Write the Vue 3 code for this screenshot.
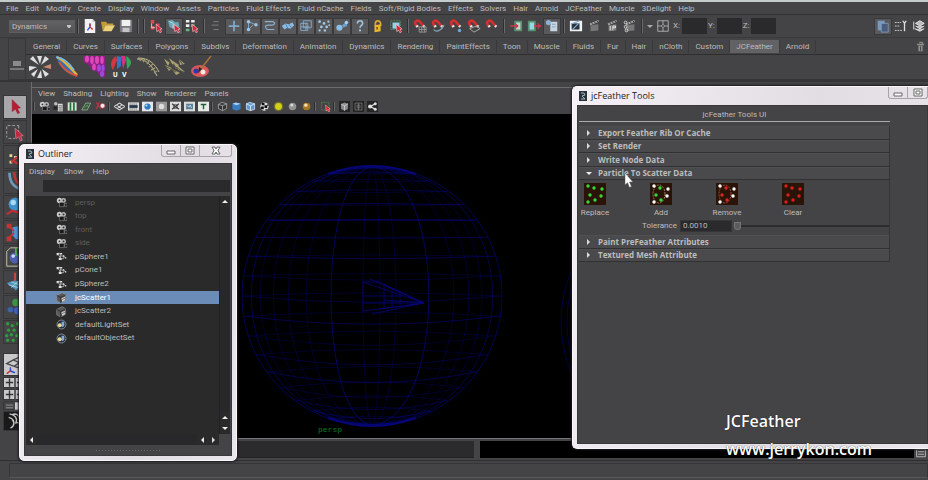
<script setup>
import { ref } from 'vue'

const menus = ['File', 'Edit', 'Modify', 'Create', 'Display', 'Window', 'Assets', 'Particles', 'Fluid Effects', 'Fluid nCache', 'Fields', 'Soft/Rigid Bodies', 'Effects', 'Solvers', 'Hair', 'Arnold', 'JCFeather', 'Muscle', '3Delight', 'Help']
const tabs = ['General', 'Curves', 'Surfaces', 'Polygons', 'Subdivs', 'Deformation', 'Animation', 'Dynamics', 'Rendering', 'PaintEffects', 'Toon', 'Muscle', 'Fluids', 'Fur', 'Hair', 'nCloth', 'Custom', 'JCFeather', 'Arnold']
const activeTab = ref('JCFeather')
const panelMenus = ['View', 'Shading', 'Lighting', 'Show', 'Renderer', 'Panels']

const redArrow = '<path d="M8 6l7 5.500-2.300.4 1.600 3-1.800.9-1.600-3-2 1.700z" fill="#d8213a" stroke="#f3cdd0" stroke-width=".7"/>'
const magnet = '<path d="M4.500 9L2.800 6C1.200 2.500 5.500 .5 8 3.200L12 8" fill="none" stroke="#d3312f" stroke-width="3"/><path d="M3 8l2.600-1.300 1 2-2.600 1.300zM10.500 8.500l2-2 1.500 1.600-2 2z" fill="#e8dfdf"/>'
const clapper = '<path d="M4 7l9-1v7l-9 1z" fill="#777"/><path d="M3 5l10-4 .6 2L4 7z" fill="#aaa"/><path d="M5 4.500l2 1.500M8 3.300l2 1.500M11 2.200l2 1.300" stroke="#333"/>'
const cube = '<path d="M3 4.500L8 2l5 2v7.500L8 14l-5-2.500z" fill="#8a8a8a"/><path d="M3 4.500L8 7l5-3M8 7v7" fill="none" stroke="#e0e0e0"/>'

const art = {
  fileNew: '<path d="M2 0h9l3 3v13H2z" fill="#f2f2f2"/><path d="M11 0v3h3" fill="#bbb"/><path d="M8 5v4M8 9l-3 4" stroke="#2b50c8" stroke-width="1.500"/><path d="M8 9l3 3M8 5v3" stroke="#cf2b2b" stroke-width="1.500"/>',
  fileOpen: '<path d="M0 3h6l1 2h7v2H5l-3 7z" fill="#c49c37"/><path d="M5 7h11l-4 7H2z" fill="#ecd07a"/>',
  fileSave: '<path d="M1 1h14v14H1z" fill="#77777c"/><path d="M3 1h10v7H3z" fill="#f0f0f0"/><path d="M4 10h8v5H4z" fill="#c4c4c9"/>',
  selHier: '<path d="M2 1h4v4H2zM2 8h4v4H2zM8 5h4v3H8z" fill="#de4a52"/><path d="M3 5v5h4" stroke="#ddd" fill="none"/>' + redArrow,
  selObj: '<path d="M1 2l5-1 4 3 3-1 1 6-6 3-5-3z" fill="#68a9b7"/><path d="M3 3l4 2v5" stroke="#bce3e6" fill="none"/>' + redArrow,
  selComp: '<path d="M1 1h4v3H1zM7 1h4v3H7zM1 6h4v3H1z" fill="#eee"/><path d="M1 11h4v3H1zM7 6h4v3H7z" fill="#6db48a"/>' + redArrow,
  lines: '<path d="M5 3h6M3 7h8M5 12h6" stroke="#858585"/>',
  handle: '<path d="M8 2v12M2 8h12" stroke="#79a9cf" stroke-width="2"/>',
  joint: '<path d="M4 3v9M4 3l9 4M4 12l5-5" stroke="#83b0d4" fill="none"/><circle cx="4" cy="3" r="2" fill="#9cc4e2"/><circle cx="4" cy="12" r="2" fill="#9cc4e2"/><circle cx="12.500" cy="6.500" r="2" fill="#9cc4e2"/>',
  curve: '<path d="M2 3h9c4 1 2 4-1 4H6c-4 0-4 3-1 5h8" stroke="#8db0cc" fill="none" stroke-width="1.300"/>',
  surface: '<path d="M1 8l4-3 4 1 4-2 2 3-4 4-4-1-3 2z" fill="#8abce6"/><path d="M5 5l3 6M9 6l3 4" stroke="#527a9c"/>',
  deform: '<path d="M2 5h8v8H2zM5 2h9v8H5zM2 9h10M8 4v9" fill="none" stroke="#86afd1"/>',
  dynamic: '<g fill="#a3c9e7"><circle cx="3" cy="3" r="1.500"/><circle cx="8" cy="5" r="1.500"/><circle cx="13" cy="3" r="1.300"/><circle cx="5" cy="9" r="1.500"/><circle cx="11" cy="9" r="1.500"/><circle cx="3" cy="13" r="1.300"/><circle cx="9" cy="13" r="1.400"/><circle cx="14" cy="7" r="1"/></g>',
  rendering: '<circle cx="5" cy="10" r="3.500" fill="#8bbfe9"/><path d="M8 7l5-4 1 5-5 2z" fill="#689fcb"/><circle cx="13" cy="4" r="2" fill="#a6cdec"/>',
  question: '<path d="M5 5c0-4 6-4 6 0 0 2-3 2.500-3 5" stroke="#a1c3de" stroke-width="1.800" fill="none"/><circle cx="8" cy="13" r="1.200" fill="#a1c3de"/>',
  lock: '<path d="M5 8V5c0-4 5-4 6 0v3" stroke="#d9a731" stroke-width="2" fill="none"/><path d="M4 7l7-1v8l-7 1z" fill="#edb62f"/><path d="M7 9v3" stroke="#5c3d08" stroke-width="1.500"/>',
  highlight: '<path d="M2 2h11v10H2z" fill="none" stroke="#4c9b5c" stroke-dasharray="2 1"/><path d="M4 4h8v7H4z" fill="#8fd3e6"/>' + redArrow,
  snapGrid: magnet + '<path d="M7 9h8v6H7zM7 12h8M10 9v6M13 9v6" fill="none" stroke="#aaa" stroke-width=".8"/>',
  snapCurve: magnet + '<path d="M3 12c4 5 10-1 12-5" fill="none" stroke="#82a9bd" stroke-width="1.300"/>',
  snapPoint: magnet + '<circle cx="12" cy="13" r="2" fill="#6aa8d5"/>',
  snapPlane: magnet + '<path d="M3 11l8-3 4 3-7 4z" fill="none" stroke="#b3b3b3"/>',
  magnet,
  input: '<path d="M6 2h9v12H6z" fill="#57926e"/><path d="M8 4h5v8H8z" fill="#bcd9d6"/><path d="M1 8h8M7 5l3 3-3 3" stroke="#ce3647" stroke-width="1.500" fill="none"/>',
  output: '<path d="M1 2h9v12H1z" fill="#57926e"/><path d="M3 4h5v8H3z" fill="#9bd6e7"/><path d="M8 8h8M12 5l3 3-3 3" stroke="#ce3647" stroke-width="1.500" fill="none"/>',
  history: '<circle cx="4" cy="4" r="3" fill="#89b2d6"/><path d="M7 3h7v11H6V8z" fill="#c7d5e3"/><path d="M8 6h4M8 9h4" stroke="#7f9bb5"/>',
  renderView: '<path d="M1 2h14v12H1z" fill="#eef2f5"/><path d="M3 5h9v7H3z" fill="#26323d"/><path d="M2 6l10-4M4 12l7-7" stroke="#86a6c1" stroke-width="1.500"/>',
  clapper,
  ipr: clapper + '<path d="M6 8v5M9 8v5M9 8h3v2H9" stroke="#eee" fill="none"/>',
  settings: clapper + '<circle cx="3" cy="4" r="1.600" fill="none" stroke="#ddd"/><circle cx="3" cy="9" r="1.600" fill="none" stroke="#ddd"/><circle cx="4" cy="13" r="1.600" fill="none" stroke="#ddd"/>',
  target: '<path d="M2 2h12v12H2zM8 2v4M8 10v4M2 8h4M10 8h4M6 8l2-2 2 2-2 2z" fill="none" stroke="#b5b5b5"/>',
  attrs: '<path d="M2 2h8v11H2z" fill="#7899c0"/><path d="M6 5h8v10H6z" fill="#4a5e7c" stroke="#93acd0" stroke-width=".7"/>',
  toolSet: '<path d="M1 4h7M1 8h5M1 13h9" stroke="#ddd" stroke-dasharray="2 1"/><path d="M12 3v11M10 2l2 3 2-3" stroke="#ddd" stroke-width="1.500" fill="none"/>',
  channels: '<path d="M4 5l5-3 5 3-5 3zM4 8l5 3 5-3M3 11l6 3 5-3" fill="#bbb" stroke="#eee"/><path d="M2 3v9" stroke="#eee"/>',
  // camera panel toolbar
  camera: '<circle cx="5" cy="5" r="3.800" fill="#cfcfcf"/><circle cx="11" cy="5" r="3.600" fill="#b5b5b5"/><circle cx="5" cy="5" r="1.300" fill="#333"/><circle cx="11" cy="5" r="1.300" fill="#333"/><path d="M5 8h7v6H5zM12 10l4-1v5l-4-1z" fill="#1b1b1b" stroke="#999" stroke-width=".8"/>',
  camAttr: '<circle cx="4" cy="4" r="2.600" fill="#bbb"/><path d="M7 4h7v11H7z" fill="#ddd"/><path d="M8 7h5M8 10h5M8 13h5M1 8h5v4H1z" stroke="#333" fill="#222"/>',
  bookmark: '<path d="M1 2h13v12H1z" fill="#d9e4d5"/><path d="M5 2v12M10 2v12" stroke="#25733c" stroke-width="2.500"/>',
  imagePlane: '<path d="M1 13L7 3h7l-5 10z" fill="#315a3d" stroke="#a8c5a5"/><path d="M5 10l4-4 2 3" stroke="#7bbd79" fill="none"/>',
  panZoom: '<path d="M2 2l6 9M6 2L2 12" stroke="#b63244" stroke-width="2"/><circle cx="11" cy="7" r="3.500" fill="#eee" stroke="#bd4052"/>',
  grid: '<path d="M0 8l8-5 8 5-8 5zM4 6l7 5M12 5L5 11" fill="none" stroke="#ddd" stroke-width="1.500"/>',
  film: '<path d="M0 2h16v12H0z" fill="#ddd"/><path d="M2 6h12v4H2z" fill="#25334a"/><path d="M2 4.500h12M2 11.500h12" stroke="#333" stroke-dasharray="2 1"/>',
  gate: '<path d="M0 1h16v14H0z" fill="#e1e7ed"/><circle cx="8" cy="8" r="4.500" fill="#2e77ce"/><circle cx="6.500" cy="6.500" r="1.500" fill="#c2e0fc"/>',
  mask: '<path d="M0 1h16v14H0z" fill="#999"/><circle cx="8" cy="8" r="4" fill="#ddd"/>',
  chart: '<path d="M0 1h16v14H0z" fill="#ddd"/><path d="M3 4l10 8M13 4L3 12" stroke="#333" stroke-width="1.500"/><circle cx="8" cy="8" r="3" fill="none" stroke="#333"/>',
  safeAct: '<path d="M0 1h16v14H0z" fill="#ddd"/><path d="M3 4h10v8H3z" fill="#537e9b"/><path d="M4 6l3 3 2-3 2 4" stroke="#fff" fill="none"/>',
  safeTitle: '<path d="M0 1h16v14H0z" fill="#e5ece5"/><path d="M4 5h8M8 5v7" stroke="#275735" stroke-width="2"/>',
  wire: '<path d="M2 5l5-3 7 2v7l-6 3-6-3zM2 5l6 2 6-3M8 7v7" fill="#333" stroke="#bbb"/>',
  shaded: '<path d="M2 4l5-2 7 2v8l-6 2-6-2z" fill="#397cc0"/><path d="M2 4l5-2 7 2-6 2z" fill="#a9d0f1"/>',
  shadedWire: '<path d="M2 4l5-2 7 2v8l-6 2-6-2z" fill="#5b99d6" stroke="#e6f4ff"/><path d="M2 4l6 3 6-3M8 7v7" stroke="#fff" fill="none"/>',
  checker: '<circle cx="8" cy="8" r="6" fill="#ddd"/><path d="M4 3h4v3H4zM8 6h4v4H8zM3 8h4v4H3zM9 12h4l-3 2zM12 4l2 3h-2z" fill="#111"/>',
  lightAll: '<circle cx="8" cy="8" r="5" fill="#e0de17"/><circle cx="8" cy="8" r="7" fill="#b9b819" opacity=".35"/>',
  ball: '<circle cx="8" cy="8" r="5.500" fill="#929292"/><circle cx="7" cy="6" r="2" fill="#ddd"/>',
  gold: '<circle cx="8" cy="8" r="5.500" fill="#a67925"/><circle cx="7" cy="6" r="2.500" fill="#f2ddb0"/>',
  isolate: '<path d="M2 2h11v11H2z" fill="none" stroke="#4d9a4d" stroke-dasharray="2 1"/>' + redArrow,
  cube: '<path d="M0 0h16v16H0z" fill="#252526"/>' + cube,
  xray: '<path d="M0 0h16v16H0z" fill="#252526"/><path d="M3 3h10v10H3zM6 6h4v4H6zM8 3v10" fill="none" stroke="#888"/>',
  joints: '<path d="M0 0h16v16H0z" fill="#252526"/><path d="M5 8l7-4M5 8l7 4" stroke="#ddd" stroke-width="2"/><circle cx="4.500" cy="8" r="3" fill="#ddd"/><circle cx="12" cy="4" r="2.200" fill="#ddd"/><circle cx="12" cy="12" r="2.200" fill="#ddd"/>',
  // outliner nodes
  mesh: '<path d="M1 4l4-1 2 4 5 1 2 2M7 7l-2 5 6-1 1-3M4 6l3 5" stroke="#d7d7d7" fill="none"/><path d="M1 3h3v3H1zM6 3h3v2H6zM4 10h4v3H4zM10 6h2v2h-2zM13 9h2v2h-2z" fill="#e3e3e3"/>',
  scatter: '<path d="M1 5l8-4 5 3v8l-7 4-6-3z" fill="#585858" stroke="#9c9c9c" stroke-width=".8"/><path d="M1 5l6 3 7-4M7 8v8" stroke="#222" fill="none"/><path d="M8 9l5-2v5l-4 2z" fill="#d5d5d5"/><path d="M9 11l4-2" stroke="#444"/>',
  set: '<circle cx="8" cy="8" r="6.500" fill="#26313d" stroke="#a4adb7"/><circle cx="5.500" cy="9" r="3" fill="#e9d59a"/><path d="M8 4h4v6l-3 2z" fill="#80abd5"/>'
}

const lead = [['fileNew', 'New scene'], ['fileOpen', 'Open scene'], ['fileSave', 'Save scene']]
const selection = [['selHier', 'Hierarchy'], ['selObj', 'Object'], ['selComp', 'Component']]
const masks = ['handle', 'joint', 'curve', 'surface', 'deform', 'dynamic', 'rendering', 'question']
const snaps = ['snapGrid', 'snapCurve', 'snapPoint', 'snapPlane', 'magnet']
const renders = ['renderView', 'clapper', 'ipr', 'settings']
const panelTools = [
  ['camera', 'camAttr', 'bookmark', 'imagePlane', 'panZoom'],
  ['grid', 'film', 'gate', 'mask', 'chart', 'safeAct', 'safeTitle'],
  ['wire', 'shaded', 'shadedWire', 'checker', 'lightAll', 'ball', 'gold'],
  ['isolate'],
  ['cube', 'xray', 'joints']
]

const shelf = [
  { name: 'Burst', svg: '<g fill="#dedede"><path d="M10 9L1 3l3-3zM11 8L8 0h5zM12 9l4-9 4 3zM13 13l7 5-4 3zM12 14l1 8H8zM9 13l-4 8-3-3zM8 11l-8 4v-5z"/></g><path d="M14 11l8-3v5z" fill="#c98b70"/><circle cx="11" cy="11" r="2" fill="#444"/>' },
  { name: 'Feather', svg: '<path d="M0 1c8 0 13 5 22 20C12 19 4 12 0 1z" fill="#326eb2"/><path d="M1 1c8 4 14 11 20 18" stroke="#e3b33c" stroke-width="2.500" fill="none"/><path d="M3 6c5 8 10 11 18 14" stroke="#d0553b" stroke-width="2" fill="none"/><path d="M0 1c8 1 13 5 18 13" stroke="#74bbe8" stroke-width="1.500" fill="none"/>' },
  { name: 'Scales', svg: '<path d="M0 0h22v21l-5-1-4-5-4-1-4-6-5-2z" fill="#8f1f86"/><g fill="#dd48b6"><ellipse cx="4" cy="3" rx="2" ry="3.500"/><ellipse cx="9" cy="4" rx="1.800" ry="4"/><ellipse cx="14" cy="4" rx="2" ry="4"/><ellipse cx="19" cy="4" rx="1.800" ry="4"/><ellipse cx="11" cy="11" rx="1.800" ry="3.500"/></g><g fill="#9b4ade"><ellipse cx="16" cy="12" rx="2" ry="3.500"/><ellipse cx="20" cy="12" rx="1.500" ry="3.500"/><ellipse cx="19" cy="18" rx="2" ry="3"/></g>' },
  { name: 'UV', svg: '<path d="M6 0c-6 4-6 10-3 14L7 4z" fill="#d73541"/><path d="M7 0v13l4-3V1z" fill="#3675c5"/><path d="M11 0l2 13 3-9-1-4z" fill="#d33286"/><path d="M16 0c7 4 6 9 1 13z" fill="#34a75a"/><text x="3" y="21" font-size="7" font-weight="700" fill="#fff">U</text><text x="12" y="21" font-size="7" font-weight="700" fill="#fff">V</text>' },
  { name: 'Guides', svg: '<path d="M0 3c9 0 15 6 20 17M1 2c11 0 17 6 21 14" fill="none" stroke="#c3be93"/><path d="M4 2l-1 3M8 3L6 6M12 5l-2 3M16 8l-4 3M18 12l-4 2M20 15l-3 2" stroke="#99946d" stroke-width="1.500"/>' },
  { name: 'Strands', svg: '<g fill="#a7a173"><path d="M0 3l6 3-2 4zM5 2l5 4-1 4zM9 5l6 4-3 4zM13 9l8 7-7-2zM1 9l7 3-3 3zM15 3l6 5-5 1zM8 13l8 4-4 2z"/></g><path d="M1 3l19 14M1 10l11 6M15 3l4 6" stroke="#57543c"/>' },
  { name: 'Paint', svg: '<ellipse cx="9" cy="15" rx="9" ry="6" fill="#d8585a"/><circle cx="5" cy="15" r="2.500" fill="#2738b6"/><circle cx="12" cy="16" r="2.500" fill="#f0eae3"/><path d="M20 0L9 14" stroke="#a6733d" stroke-width="1.500"/><path d="M8 11l3 2-4 4z" fill="#2d2723"/>' }
]

const tools = [
  { name: 'Select', svg: '<path d="M9 4l9 9-3.500.3 2.500 5-2 1-2.500-5L9 17z" fill="#bb1a35" stroke="#7e1528" stroke-width=".5"/>' },
  { name: 'Lasso', svg: '<path d="M4 5h12M3 6v12M5 19h7M16 5v8" stroke="#a9a9a9" fill="none" stroke-dasharray="3 2"/><path d="M12 8l9 8-3 .3 2 4.500-2 1-2-4.500-3 2z" fill="#c22740" stroke="#dfa2a8" stroke-width=".6"/>' },
  { name: 'Paint selection', svg: '<path d="M6 9h3v3H6zM6 16h3v3H6zM11 11h3v3h-3z" fill="#e4db9a"/><path d="M8 18l6-6M11 17l4 2" stroke="#cc3335" stroke-width="2.500"/>' },
  { name: 'Move', svg: '<path d="M6 2c0 12 6 16 15 19" stroke="#6c99b8" stroke-width="3" fill="none"/><path d="M11 1c0 8 3 13 11 17" stroke="#b63538" stroke-width="3" fill="none"/>' },
  { name: 'Rotate', svg: '<circle cx="12" cy="9" r="7" fill="#3d91ce"/><circle cx="10" cy="7" r="3" fill="#a7d8f5"/><path d="M3 20l6-4 10 3" stroke="#c52d32" stroke-width="2.500" fill="none"/>' },
  { name: 'Scale', svg: '<path d="M9 7l9-2 4 5v9l-9 1-4-5z" fill="#4b96d8"/><path d="M3 3h5v5H3zM3 17h5v5H3z" fill="#c83337"/><path d="M5 5l6 6M5 19l6-6" stroke="#c83337" stroke-width="2"/>' },
  { name: 'Universal manipulator', svg: '<path d="M3 6l4-4h12v15l-4 5H3z" fill="none" stroke="#c9c9a8"/><circle cx="12" cy="13" r="6" fill="#4b5fae"/><circle cx="10" cy="11" r="2" fill="#d1d8f5"/><path d="M13 2v9" stroke="#43b546" stroke-width="2"/>' },
  { name: 'Soft modification', svg: '<path d="M3 13l9-3 10 4-9 7z" fill="#4f93b8"/><path d="M5 15l10 3M8 12l9 3M8 18l8-7" stroke="#a7d4e7"/><path d="M12 2v9" stroke="#d14446" stroke-width="2"/>' },
  { name: 'Show manipulator', svg: '<circle cx="13" cy="7" r="4" fill="#3b9445"/><circle cx="7" cy="15" r="3" fill="#3c62a7"/><circle cx="15" cy="16" r="4" fill="#3f61bd"/>' },
  { name: 'Scatter', svg: '<g fill="#2f9c3c"><circle cx="4" cy="3" r="1.800"/><circle cx="9" cy="5" r="1.800"/><circle cx="15" cy="3" r="1.800"/><circle cx="5" cy="10" r="1.800"/><circle cx="11" cy="10" r="1.800"/><circle cx="17" cy="10" r="1.800"/><circle cx="3" cy="16" r="1.800"/><circle cx="8" cy="15" r="1.800"/><circle cx="14" cy="16" r="1.800"/><circle cx="10" cy="21" r="1.800"/><circle cx="4" cy="21" r="1.800"/></g>' }
]

const nodes = [
  { name: 'persp', icon: 'camera', dim: true }, { name: 'top', icon: 'camera', dim: true },
  { name: 'front', icon: 'camera', dim: true }, { name: 'side', icon: 'camera', dim: true },
  { name: 'pSphere1', icon: 'mesh' }, { name: 'pCone1', icon: 'mesh' }, { name: 'pSphere2', icon: 'mesh' },
  { name: 'jcScatter1', icon: 'scatter' }, { name: 'jcScatter2', icon: 'scatter' },
  { name: 'defaultLightSet', icon: 'set' }, { name: 'defaultObjectSet', icon: 'set' }
]
const selected = ref('jcScatter1')

const dots = [[4, 3], [10, 5], [18, 6], [6, 12], [17, 13], [11, 17], [4, 19]]
const actions = [
  { name: 'Replace', dot: () => '#35d83b' },
  { name: 'Add', ring: '#b9a27a', dot: i => ([1, 3, 5].includes(i) ? '#35d83b' : '#fff') },
  { name: 'Remove', ring: '#d05a4a', dot: i => ([1, 3, 5].includes(i) ? '#e02525' : '#fff') },
  { name: 'Clear', dot: () => '#d81f1f' }
]
const upper = ['Export Feather Rib Or Cache', 'Set Render', 'Write Node Data', 'Particle To Scatter Data']
const lower = ['Paint PreFeather Attributes', 'Textured Mesh Attribute']
const tolerance = ref('0.0010')
const slide = ref(0)

// Wireframe sphere: latitude rings seen slightly from above, meridians as half ellipses
const R = 129
const rings = []
for (let k = 1; k < 20; k++) {
  const a = (k / 20) * Math.PI
  const y = -Math.cos(a) * R
  const rx = Math.sin(a) * R
  const bend = (y + 70) * 0.09 * Math.sin(a)
  rings.push({ d: `M${-rx} ${y}Q0 ${y + bend * 2} ${rx} ${y}`, o: k === 6 ? 0.95 : 0.34 + (k % 3) * 0.14 })
  rings.push({ d: `M${-rx} ${y}Q0 ${y - bend} ${rx} ${y}`, o: 0.34 })
}
const meridians = [-121, -112, -99, -84, -66, -41, -9, 8, 24, 57, 82, 97, 110, 121].map(x => ({
  d: `M0 ${-R}C${x * 1.33} ${-R + 6} ${x * 1.33} ${R - 6} 0 ${R}`,
  o: x === -41 || x === 57 ? 0.8 : Math.abs(x) > 118 ? 0.6 : 0.38
}))
</script>

<template>
  <div class="app">
    <nav class="menubar" aria-label="Main menu">
      <button v-for="m in menus" :key="m">{{ m }}</button>
    </nav>

    <div class="status">
      <select class="mode" aria-label="Menu set"><option>Dynamics</option></select>
      <i class="bar"></i>
      <div class="group">
        <button v-for="[i, n] in lead" :key="i" class="tool" :aria-label="n"><svg viewBox="0 0 16 16" v-html="art[i]" /></button>
      </div>
      <i class="bar"></i><i class="bar"></i>
      <div class="group">
        <button v-for="[i, n] in selection" :key="i" class="tool" :class="{ boxed: i === 'selObj' }" :aria-label="n"><svg viewBox="0 0 16 16" v-html="art[i]" /></button>
      </div>
      <i class="bar"></i>
      <div class="group">
        <button class="tool" aria-label="Mask presets"><svg viewBox="0 0 16 16" v-html="art.lines" /></button>
        <button v-for="i in masks" :key="i" class="tool boxed" :aria-label="i"><svg viewBox="0 0 16 16" v-html="art[i]" /></button>
        <button class="tool" aria-label="Lock selection"><svg viewBox="0 0 16 16" v-html="art.lock" /></button>
        <button class="tool" aria-label="Highlight selection"><svg viewBox="0 0 16 16" v-html="art.highlight" /></button>
      </div>
      <i class="bar"></i>
      <div class="group">
        <button v-for="i in snaps" :key="i" class="tool" :aria-label="i"><svg viewBox="0 0 16 16" v-html="art[i]" /></button>
      </div>
      <i class="bar"></i>
      <div class="group">
        <button class="tool" aria-label="Inputs"><svg viewBox="0 0 16 16" v-html="art.input" /></button>
        <button class="tool" aria-label="Outputs"><svg viewBox="0 0 16 16" v-html="art.output" /></button>
        <button class="tool boxed" aria-label="History"><svg viewBox="0 0 16 16" v-html="art.history" /></button>
      </div>
      <i class="bar"></i>
      <div class="group">
        <button v-for="i in renders" :key="i" class="tool" :aria-label="i"><svg viewBox="0 0 16 16" v-html="art[i]" /></button>
      </div>
      <i class="bar"></i>
      <button class="drop" aria-label="Input mode menu"><i class="down"></i></button>
      <button class="tool" aria-label="Input mode"><svg viewBox="0 0 16 16" v-html="art.target" /></button>
      <label v-for="a in ['X', 'Y', 'Z']" :key="a" class="axis">{{ a }}:<input type="text" /></label>
      <div class="group end">
        <button class="tool boxed" aria-label="Attribute editor"><svg viewBox="0 0 16 16" v-html="art.attrs" /></button>
        <button class="tool" aria-label="Tool settings"><svg viewBox="0 0 16 16" v-html="art.toolSet" /></button>
        <button class="tool" aria-label="Channel box"><svg viewBox="0 0 16 16" v-html="art.channels" /></button>
      </div>
    </div>

    <section class="shelf">
      <div class="shelf-side"><i class="knob"></i><i class="rule"></i></div>
      <div class="shelf-main">
        <div class="tabs" role="tablist">
          <button v-for="t in tabs" :key="t" role="tab" :aria-selected="t === activeTab" :class="{ on: t === activeTab }" @click="activeTab = t">{{ t }}</button>
          <button class="trash" aria-label="Delete shelf item"><svg viewBox="0 0 16 16"><path d="M3 4h10v2H3zM5 7h6v8H5z" fill="#929292" /><path d="M6 2h5v2" stroke="#bbb" fill="none" /><path d="M8 8v6" stroke="#222" /></svg></button>
        </div>
        <div class="shelf-items">
          <button v-for="s in shelf" :key="s.name" :aria-label="s.name"><svg viewBox="0 0 22 22" v-html="s.svg" /></button>
        </div>
      </div>
    </section>

    <main class="work">
      <aside class="toolbox">
        <button v-for="(t, i) in tools" :key="t.name" :class="{ on: i === 0 }" :aria-label="t.name"><svg viewBox="0 0 24 24" v-html="t.svg" /></button>
        <div class="layouts">
          <button class="light big" aria-label="Perspective view"><svg viewBox="0 0 24 24"><path d="M3 11l7-4 7 3-6 4zM10 7l7-3 6 3-6 3M11 14l7 2 4-4" fill="none" stroke="#444" stroke-width="1.500" /><path d="M7 15v4l5 2" stroke="#284ecc" stroke-width="1.500" fill="none" /><path d="M7 19l-4 3" stroke="#c33" stroke-width="1.500" /></svg></button>
          <button v-for="n in 2" :key="n" class="light" :aria-label="'Layout ' + n"><svg viewBox="0 0 24 11"><path d="M12 0v11" stroke="#555" stroke-width="2" /><path d="M2 5.500h8M6 1v9M14 5.500h8M18 1v9" stroke="#333" stroke-width="1.500" /></svg></button>
          <button class="slim" aria-label="Layout list"><svg viewBox="0 0 24 8"><path d="M2 3h8M2 6h8" stroke="#999" /><path d="M12 0h10v8H12z" fill="#ccc" /></svg></button>
          <button class="dark" aria-label="About"><svg viewBox="0 0 22 20"><path d="M5 2c6 1 9 5 7 10 5-1 6 3 4 6M4 6c5 1 7 5 5 9M6 18c4-2 5-6 2-9M8 3c4-2 7 0 8 4" fill="none" stroke="#c9c9c9" stroke-width="1.500" /></svg></button>
        </div>
      </aside>

      <section class="panel">
        <nav class="panel-menu"><button v-for="m in panelMenus" :key="m">{{ m }}</button></nav>
        <div class="panel-tools">
          <div v-for="(g, i) in panelTools" :key="i" class="set">
            <button v-for="t in g" :key="t" :aria-label="t"><svg viewBox="0 0 16 16" v-html="art[t]" /></button>
          </div>
        </div>
        <div class="viewport">
          <svg viewBox="0 0 896 324" preserveAspectRatio="xMinYMin slice" role="img" aria-label="Perspective viewport">
            <g fill="none" stroke="#060676">
              <g transform="translate(340 182)">
                <circle r="130" opacity=".7" />
                <path d="M-44-122A130 130 0 0 1 44-122M-44 122A130 130 0 0 0 44 122" stroke-width="2" />
                <path v-for="(r, i) in rings" :key="'r' + i" :d="r.d" :opacity="r.o" />
                <path v-for="(m, i) in meridians" :key="'m' + i" :d="m.d" :opacity="m.o" />
                <path d="M-9-14L52 7L-9 15ZM-2-17L52 7L0 18M5-15L52 7L8 13M12-11L52 7M12 4L52 7M12-11V12M20-8V11M28-4V9M-9-14H5M-9 0H30M-9 7H50" opacity=".85" />
              </g>
              <g transform="translate(659 208)" opacity=".55">
                <circle r="130" /><ellipse rx="124" ry="130" /><ellipse rx="115" ry="130" />
              </g>
            </g>
            <text x="286" y="318" fill="#0c7a25" font-size="8" font-family="Liberation Mono, monospace">persp</text>
          </svg>
        </div>
        <div class="range">
          <div class="command"></div>
          <div class="result"></div>
          <button class="script" aria-label="Script editor"><svg viewBox="0 0 16 16"><path d="M1 2h14v12H1zM3 6h10M3 10h10" fill="none" stroke="#bbb" stroke-width="1.500" /></svg></button>
        </div>
      </section>
    </main>
    <footer class="help"><div></div></footer>

    <section class="window outliner" aria-label="Outliner">
      <header class="title">
        <svg viewBox="0 0 8 10" class="logo"><path d="M0 0h8v10H0z" fill="#27323a" /><path d="M2 2h3l1 2-3 1 3 3H2" fill="none" stroke="#a8b6bd" /></svg>
        <h2>Outliner</h2>
        <div class="controls">
          <button aria-label="Minimize"><svg viewBox="0 0 12 10"><path d="M2 5h8v3H2z" fill="#fff" stroke="#666" /></svg></button>
          <button aria-label="Maximize"><svg viewBox="0 0 12 10"><path d="M2 1h8v7H2zM4 3h4v3H4z" fill="#fff" stroke="#666" /></svg></button>
          <button class="wide" aria-label="Close"><svg viewBox="0 0 12 10"><path d="M2 1h3l1 2 1-2h3L8 4.500 10 8H7L6 6 5 8H2l2-3.500z" fill="#fff" stroke="#666" /></svg></button>
        </div>
      </header>
      <div class="body">
        <nav class="win-menu"><button>Display</button><button>Show</button><button>Help</button></nav>
        <div class="filter"><input type="text" aria-label="Filter nodes" /></div>
        <div class="tree">
          <ul>
            <li v-for="n in nodes" :key="n.name" :class="{ dim: n.dim, on: n.name === selected }" @click="selected = n.name">
              <svg viewBox="0 0 16 16" v-html="art[n.icon]" /><span>{{ n.name }}</span>
            </li>
          </ul>
          <div class="vbar">
            <button aria-label="Scroll up"><i class="up"></i></button>
            <div class="track"></div>
            <button aria-label="Page up"><i class="up"></i></button>
            <button aria-label="Scroll down"><i class="down"></i></button>
          </div>
        </div>
        <div class="hbar">
          <button aria-label="Scroll left"><i class="left"></i></button>
          <div class="track"></div>
          <button aria-label="Page left"><i class="left"></i></button>
          <button aria-label="Scroll right"><i class="right"></i></button>
        </div>
        <div class="grip"></div>
      </div>
    </section>

    <section class="window feather" aria-label="jcFeather Tools">
      <header class="title">
        <svg viewBox="0 0 8 10" class="logo"><path d="M0 0h8v10H0z" fill="#27323a" /><path d="M2 2h3l1 2-3 1 3 3H2" fill="none" stroke="#a8b6bd" /></svg>
        <h2>jcFeather Tools</h2>
        <div class="controls">
          <button aria-label="Minimize"><svg viewBox="0 0 12 10"><path d="M2 5h8v3H2z" fill="#fff" stroke="#666" /></svg></button>
          <button class="last" aria-label="Maximize"><svg viewBox="0 0 12 10"><path d="M2 1h8v7H2zM4 3h4v3H4z" fill="#fff" stroke="#666" /></svg></button>
        </div>
      </header>
      <div class="body">
        <div class="sheet">
          <h3>jcFeather Tools UI</h3>
          <div class="folds four">
            <button v-for="f in upper" :key="f" :aria-expanded="f === upper[3]"><i :class="f === upper[3] ? 'down' : 'right'"></i>{{ f }}</button>
          </div>
          <div class="scatter">
            <div class="actions">
              <button v-for="a in actions" :key="a.name">
                <svg viewBox="0 0 22 22">
                  <path d="M0 0h22v22H0z" fill="#2a1408" />
                  <ellipse v-if="a.ring" cx="9" cy="11" rx="6" ry="9" fill="none" :stroke="a.ring" stroke-dasharray="2 1" opacity=".7" />
                  <circle v-for="(d, i) in dots" :key="i" :cx="d[0]" :cy="d[1]" r="1.700" :fill="a.dot(i)" />
                </svg>
                <span>{{ a.name }}</span>
              </button>
            </div>
            <div class="tolerance">
              <label for="tol">Tolerance</label>
              <input id="tol" v-model="tolerance" type="text" />
              <input v-model="slide" type="range" min="0" max="100" aria-label="Tolerance slider" />
            </div>
          </div>
          <div class="folds two">
            <button v-for="f in lower" :key="f"><i class="right"></i>{{ f }}</button>
          </div>
        </div>
      </div>
    </section>

    <div class="credit"><p>JCFeather</p><p>www.jerrykon.com</p></div>
    <svg class="pointer" viewBox="0 0 9 15"><path d="M1 0v12l2.500-2.300L5.500 14.500l2-1L5.500 9H9z" fill="#fff" stroke="#555" stroke-width=".5" /></svg>
  </div>
</template>

<style>
body { margin: 0; background: #444345; }
</style>

<style scoped>
.app { position: relative; display: flex; flex-direction: column; min-height: 100vh; overflow: hidden; box-sizing: border-box; border-top: 2px solid #c5cccc; background: #444345; color: #bdbdbd; font: 8px/12px Roboto, "Liberation Sans", sans-serif; }
.app *, .app *::before { box-sizing: border-box; }
button { padding: 0; border: 0; background: none; color: inherit; font: inherit; display: flex; align-items: center; justify-content: center; white-space: nowrap; }
input, select { font: inherit; color: inherit; border: 0; padding: 0; margin: 0; min-width: 0; border-radius: 0; }
svg { display: block; flex: none; }
h2, h3, p, ul { margin: 0; padding: 0; font-weight: 400; }

.menubar { display: flex; gap: 7px; height: 13px; padding: 1px 0 0 6px; border-bottom: 1px solid #323133; }
.status { display: flex; align-items: center; height: 22px; padding-left: 9px; }
.mode { appearance: none; width: 66px; height: 13px; padding-left: 2px; border: 1px solid #5d5c5e; line-height: 11px; background-image: linear-gradient(135deg, #c2c2c2 50%, transparent 50%), linear-gradient(225deg, #c2c2c2 50%, transparent 50%), linear-gradient(#626163, #545355); background-size: 3px 3px, 3px 3px, auto; background-repeat: no-repeat; background-position: right 2px center, right 5px center, 0 0; }
.bar { flex: none; width: 2px; height: 14px; margin: 0 2px; border-left: 1px solid #2f2e30; border-right: 1px solid #69686a; }
.group { display: flex; flex: none; }
.tool { width: 18px; height: 17px; flex: none; }
.tool svg { width: 14px; height: 14px; }
.drop { width: 9px; height: 17px; opacity: .6; }
.boxed { background: #59595b; border: 1px solid #39383a; }
.axis { display: flex; align-items: center; gap: 2px; margin-left: 1px; }
.axis input { width: 25px; height: 16px; background: #2a292b; }
.end { margin-left: auto; }

.shelf { display: flex; height: 45px; border-top: 1px solid #3a393b; border-bottom: 2px solid #353436; padding-left: 8px; }
.shelf-side { width: 18px; display: flex; flex-direction: column; align-items: center; justify-content: flex-end; gap: 2px; padding-bottom: 9px; border: 1px solid #38373a; }
.knob { width: 8px; height: 5px; background: #8a898b; }
.rule { width: 14px; height: 2px; background: #777; }
.shelf-main { flex: 1; min-width: 0; }
.tabs { display: flex; height: 17px; border-bottom: 1px solid #2e2d2f; padding: 2px 0 1px 1px; }
.tabs button { padding: 0 6px; border-right: 1px solid #39383a; }
.tabs .on { background: #626163; }
.tabs .trash { margin-left: auto; padding: 0; border: 0; width: 16px; }
.trash svg { width: 11px; height: 11px; }
.shelf-items { display: flex; height: 25px; align-items: center; border-bottom: 1px solid #353436; }
.shelf-items button { width: 27px; }
.shelf-items svg { width: 22px; height: 22px; overflow: visible; }

.work { display: flex; flex: 1; min-height: 0; }
.toolbox { width: 31px; flex: none; padding: 13px 4px 0 3px; display: flex; flex-direction: column; gap: 1px; }
.toolbox button { width: 24px; height: 24px; border: 1px solid #363537; }
.toolbox .on { background: #a8a7a9; }
.toolbox svg { width: 22px; height: 22px; }
.layouts { display: flex; flex-direction: column; gap: 1px; padding-top: 8px; }
.layouts .light { height: 11px; background: #c9c8ca; }
.layouts .light svg { height: 11px; }
.layouts .big, .layouts .big svg { height: 23px; }
.layouts .slim { height: 9px; }
.layouts .slim svg { height: 8px; }
.layouts .dark { height: 20px; background: #19191a; }
.layouts .dark svg { height: 18px; }
.panel { flex: 1; min-width: 0; display: flex; flex-direction: column; padding-top: 5px; border-left: 1px solid #6b6a6c; }
.panel-menu { display: flex; gap: 8px; padding-left: 6px; height: 12px; border-top: 1px solid #6b6a6c; }
.panel-tools { display: flex; height: 15px; padding-bottom: 1px; align-items: center; }
.set { display: flex; align-items: center; }
.set::before { content: ""; width: 2px; height: 9px; margin: 0 2px 0 1px; border-left: 1px solid #2d2c2e; border-right: 1px solid #666; }
.set button { width: 14px; height: 12px; }
.set svg { width: 11px; height: 11px; }
.viewport { flex: 1; min-height: 0; background: #000; overflow: hidden; position: relative; border-bottom: 1px solid #777678; }
.viewport svg { position: absolute; left: 0; top: 0; width: 100%; height: 100%; }
.range { display: flex; height: 21px; padding: 2px 0; }
.command { flex: 442; background: #2b2a2c; border-bottom: 1px solid #232224; }
.result { flex: 434; margin-left: 6px; background: #000; }
.script { width: 14px; align-self: flex-end; }
.script svg { width: 10px; height: 10px; }
.help { height: 20px; padding: 2px 0 2px 9px; border-top: 1px solid #2f2e30; }
.help div { height: 15px; border: 1px solid #363537; border-bottom-color: #58575a; }

.window { position: absolute; display: flex; flex-direction: column; background: linear-gradient(100deg, #f4f0f5, #e2dce3 60%, #ebe5ec); border: 1px solid #f8f6f9; border-radius: 5px; box-shadow: 0 0 2px 1px #1b1b1d; }
.window .body { flex: 1; background: #444345; display: flex; flex-direction: column; min-height: 0; border: 1px solid #39383a; }
.title { display: flex; height: 18px; align-items: flex-start; padding-left: 2px; color: #222; font: 9px/16px "Open Sans", "Noto Sans", sans-serif; }
.logo { width: 8px; height: 10px; margin: 4px 4px 0 0; }
.title h2 { font-size: 9px; line-height: 17px; }
.controls { margin-left: auto; display: flex; height: 12px; border: 1px solid #a9a4ab; border-top: 0; border-radius: 0 0 3px 3px; }
.controls button { width: 19px; border-right: 1px solid #a9a4ab; }
.controls .wide { width: 31px; border: 0; }
.controls .last { border: 0; }
.controls svg { width: 12px; height: 10px; }
.outliner { left: 19px; top: 142px; width: 218px; height: 317px; padding: 0 4px 4px; }
.win-menu { display: flex; gap: 9px; padding-left: 4px; height: 16px; }
.filter { padding: 0 1px 0 18px; height: 16px; }
.filter input { width: 100%; height: 12px; background: #2a292b; display: block; }
.tree { flex: 1; display: flex; min-height: 0; margin: 0 1px; background: #2a2a2b; }
.tree ul { flex: 1; height: 149px; display: grid; grid-auto-rows: 1fr; list-style: none; }
.tree li { display: flex; align-items: center; gap: 8px; padding-left: 30px; min-height: 0; }
.tree li svg { width: 11px; height: 11px; }
.dim span { color: #5e5e5e; }
.tree .on { background: #6c8cb8; color: #fff; }
.vbar { width: 11px; display: flex; flex-direction: column; border-left: 1px solid #222; }
.vbar button { height: 11px; }
.track { flex: 1; background: #282729; }
.hbar { display: flex; height: 11px; margin: 0 12px 0 1px; background: #2a2a2b; }
.hbar button { width: 11px; }
.grip { height: 10px; margin: 0 auto; width: 64px; background: repeating-linear-gradient(90deg, #666 0 1px, transparent 1px 3px) center / 100% 1px no-repeat; }
.up, .down, .left, .right { display: block; width: 0; height: 0; border: 3px solid transparent; }
.up { border-top: 0; border-bottom-color: #eee; }
.down { border-bottom: 0; border-top-color: #eee; }
.left { border-left: 0; border-right-color: #eee; }
.right { border-right: 0; border-left-color: #ddd; }

.feather { left: 572px; right: 0; top: 84px; height: 363px; padding: 0 0 4px 4px; border-radius: 5px 0 0 5px; border-right: 0; }
.sheet { width: 311px; margin-left: 1px; }
.sheet h3 { height: 16px; margin-bottom: 4px; font-size: 8px; line-height: 17px; text-align: center; border-bottom: 1px solid #aaa; }
.folds { display: grid; grid-auto-rows: 1fr; border-right: 1px solid #333; }
.four { height: 54px; }
.two { height: 27px; }
.folds button { justify-content: flex-start; padding-left: 8px; font-family: "Open Sans", "Noto Sans", sans-serif; font-weight: 700; min-height: 0; background: #4a494b; border-top: 1px solid #504f51; border-bottom: 1px solid #313032; line-height: 10px; }
.folds .right { margin-right: 8px; }
.folds .down { margin: 0 6px 0 -1px; }
.scatter { height: 55px; padding-top: 3px; border-right: 1px solid #353436; }
.actions { display: grid; grid-template-columns: repeat(4, 66px); margin-left: -17px; }
.actions button { flex-direction: column; gap: 2px; }
.actions svg { width: 22px; height: 22px; }
.tolerance { display: flex; align-items: center; height: 14px; padding-left: 63px; gap: 3px; }
.tolerance input[type="text"] { width: 52px; height: 12px; padding-left: 2px; background: #2a292b; border: 1px solid #353436; }
.tolerance input[type="range"] { flex: 1; height: 10px; margin-left: -1px; appearance: none; background: linear-gradient(#2d2c2e, #2d2c2e) center / 100% 2px no-repeat; }
.tolerance input[type="range"]::-webkit-slider-thumb { appearance: none; width: 7px; height: 8px; border: 1px solid #777; background: #5b5a5c; border-radius: 1px 1px 4px 4px; }

.credit { position: absolute; right: 53px; bottom: 17px; width: 149px; color: #fff; font: 600 16px/28px "Open Sans", "Noto Sans", sans-serif; text-shadow: 0 0 1px #000; }
.credit p { font-weight: 600; }
.pointer { position: absolute; left: 624px; top: 171px; width: 9px; height: 15px; }
</style>
